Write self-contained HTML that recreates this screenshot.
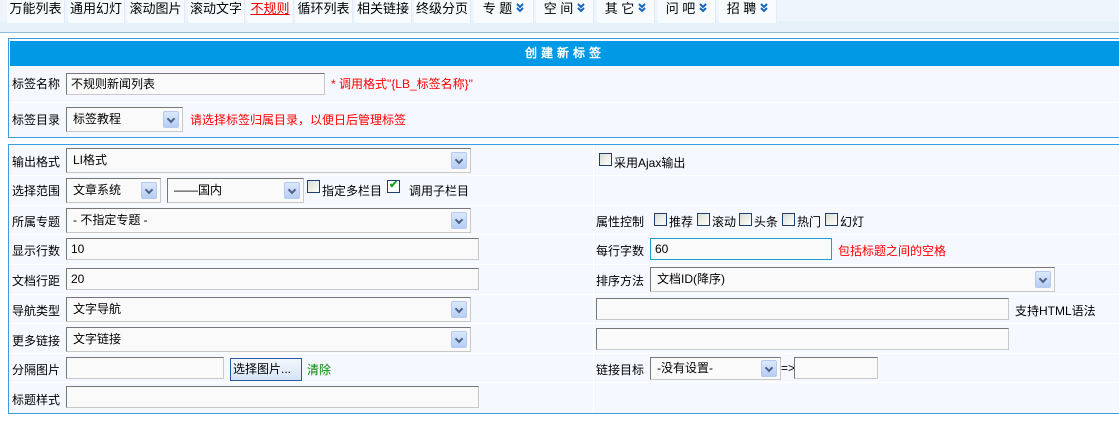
<!DOCTYPE html><html><head><meta charset="utf-8"><style>
*{margin:0;padding:0;box-sizing:border-box}
body{width:1119px;height:421px;overflow:hidden;background:#fff;font:12px "Liberation Sans","WenQuanYi Zen Hei",sans-serif;color:#000;position:relative}
.a{position:absolute;white-space:nowrap}
.nav{position:absolute;left:0;top:0;width:1119px;height:32px;background:#e6f1fa}
.nav .top{position:absolute;left:0;top:0;width:1119px;height:21px;background:#eef5fc}
.tab{position:absolute;top:0;height:23px;background:#f7fbfe;font-size:13px;line-height:18px;text-align:center;border-right:1px solid #e1ecf6}
.tab svg{vertical-align:-1px;margin-left:4px}
.line{position:absolute;left:0;top:32px;width:1119px;height:1px;background:#8fbedb}
.panel{position:absolute;left:8px;border:1px solid #3d9be0;background:#f5f8fe;right:-2px}
.hd{position:absolute;left:1px;right:0;top:2px;height:25px;background:#0099e6;color:#fff;font-weight:bold;text-align:center;line-height:25px;letter-spacing:4px}
.sep{position:absolute;left:0;right:0;height:1px;background:#fff}
.inp{position:absolute;height:22px;background:#fafafa;border:1px solid #c8c8c8;border-top-color:#777;border-left-color:#777;padding-left:4px;line-height:20px}
.sel{position:absolute;height:25px;background:#fafafa;border:1px solid #c8c8c8;border-top-color:#777;border-left-color:#777;padding-left:6px;line-height:22px}
.sel i{position:absolute;right:3px;top:3px;width:16px;height:17px;background:linear-gradient(#dbe8fb,#b5cdf4);border:1px solid #b6c9ee;border-radius:2px}
.sel i:after{content:"";position:absolute;left:4px;top:4px;width:4px;height:4px;border-right:2px solid #4d6185;border-bottom:2px solid #4d6185;transform:rotate(45deg)}
.cb{position:absolute;width:13px;height:13px;border:1px solid #1c3f6e;background:linear-gradient(135deg,#dcdcd4,#fff)}
.red{color:#f00}
</style></head><body>
<svg width="0" height="0" style="position:absolute"><defs><symbol id="dc" viewBox="0 0 8 11"><path d="M1 1l3 3 3-3M1 5l3 3 3-3" fill="none" stroke="#1565c0" stroke-width="2"/></symbol></defs></svg>
<div class="nav"><div class="top"></div>
<div class="tab" style="left:7px;width:58px">万能列表</div>
<div class="tab" style="left:68px;width:57px">通用幻灯</div>
<div class="tab" style="left:127px;width:58px">滚动图片</div>
<div class="tab" style="left:188px;width:57px">滚动文字</div>
<div class="tab" style="left:247px;width:47px;color:#e00;text-decoration:underline">不规则</div>
<div class="tab" style="left:295px;width:58px">循环列表</div>
<div class="tab" style="left:355px;width:57px">相关链接</div>
<div class="tab" style="left:414px;width:57px">终级分页</div>
<div class="tab" style="left:474px;width:60px">专 题<svg width="8" height="11"><use href="#dc"/></svg></div>
<div class="tab" style="left:536px;width:58px">空 间<svg width="8" height="11"><use href="#dc"/></svg></div>
<div class="tab" style="left:597px;width:58px">其 它<svg width="8" height="11"><use href="#dc"/></svg></div>
<div class="tab" style="left:658px;width:58px">问 吧<svg width="8" height="11"><use href="#dc"/></svg></div>
<div class="tab" style="left:719px;width:58px">招 聘<svg width="8" height="11"><use href="#dc"/></svg></div>
</div>
<div class="line"></div>

<div class="panel" style="top:38px;height:100px">
<div class="hd">创建新标签</div>
<div class="sep" style="top:63px"></div>
<div class="a" style="left:3px;top:36px">标签名称</div>
<div class="inp" style="left:57px;top:34px;width:259px">不规则新闻列表</div>
<div class="a red" style="left:322px;top:36px">* 调用格式"{LB_标签名称}"</div>
<div class="a" style="left:3px;top:72px">标签目录</div>
<div class="sel" style="left:57px;top:68px;width:117px">标签教程<i></i></div>
<div class="a red" style="left:181px;top:72px">请选择标签归属目录，以便日后管理标签</div>
</div>

<div class="panel" style="top:144px;height:270px">
<div class="sep" style="top:30px"></div><div class="sep" style="top:60px"></div><div class="sep" style="top:89px"></div><div class="sep" style="top:119px"></div><div class="sep" style="top:149px"></div><div class="sep" style="top:178px"></div><div class="sep" style="top:208px"></div><div class="sep" style="top:237px"></div>
<div class="a" style="left:584px;top:0;width:1px;height:268px;background:#fff"></div>
</div>

<div class="a" style="left:12px;top:153px">输出格式</div>
<div class="sel" style="left:66px;top:148px;width:405px">LI格式<i></i></div>
<div class="cb" style="left:599px;top:153px"></div><div class="a" style="left:614px;top:154px">采用Ajax输出</div>

<div class="a" style="left:12px;top:182px">选择范围</div>
<div class="sel" style="left:66px;top:178px;width:95px">文章系统<i></i></div>
<div class="sel" style="left:167px;top:178px;width:137px">——国内<i></i></div>
<div class="cb" style="left:307px;top:180px"></div><div class="a" style="left:322px;top:182px">指定多栏目</div>
<div class="cb" style="left:387px;top:180px;background:#fff"></div><div class="a" style="left:389px;top:178px;color:#1aa01a;font-size:11px;font-weight:bold">✔</div>
<div class="a" style="left:409px;top:182px">调用子栏目</div>

<div class="a" style="left:12px;top:213px">所属专题</div>
<div class="sel" style="left:66px;top:208px;width:405px">- 不指定专题 -<i></i></div>
<div class="a" style="left:596px;top:213px">属性控制</div>
<div class="cb" style="left:654px;top:213px"></div><div class="a" style="left:669px;top:213px">推荐</div>
<div class="cb" style="left:697px;top:213px"></div><div class="a" style="left:712px;top:213px">滚动</div>
<div class="cb" style="left:739px;top:213px"></div><div class="a" style="left:754px;top:213px">头条</div>
<div class="cb" style="left:782px;top:213px"></div><div class="a" style="left:797px;top:213px">热门</div>
<div class="cb" style="left:825px;top:213px"></div><div class="a" style="left:840px;top:213px">幻灯</div>

<div class="a" style="left:12px;top:242px">显示行数</div>
<div class="inp" style="left:66px;top:238px;width:413px">10</div>
<div class="a" style="left:596px;top:242px">每行字数</div>
<div class="inp" style="left:650px;top:238px;width:182px;border:1px solid #1a9fcf">60</div>
<div class="a red" style="left:838px;top:242px">包括标题之间的空格</div>

<div class="a" style="left:12px;top:272px">文档行距</div>
<div class="inp" style="left:66px;top:268px;width:413px">20</div>
<div class="a" style="left:596px;top:272px">排序方法</div>
<div class="sel" style="left:650px;top:267px;width:405px">文档ID(降序)<i></i></div>

<div class="a" style="left:12px;top:302px">导航类型</div>
<div class="sel" style="left:66px;top:297px;width:405px">文字导航<i></i></div>
<div class="inp" style="left:596px;top:298px;width:413px"></div>
<div class="a" style="left:1015px;top:302px">支持HTML语法</div>

<div class="a" style="left:12px;top:332px">更多链接</div>
<div class="sel" style="left:66px;top:327px;width:405px">文字链接<i></i></div>
<div class="inp" style="left:596px;top:328px;width:413px"></div>

<div class="a" style="left:12px;top:361px">分隔图片</div>
<div class="inp" style="left:66px;top:357px;width:158px"></div>
<div class="a" style="left:230px;top:358px;width:72px;height:23px;border:1px solid #2a5ba8;background:linear-gradient(#f4f8fd,#d5e3f6);line-height:20px;padding-left:2px">选择图片...</div>
<div class="a" style="left:307px;top:361px;color:#080">清除</div>
<div class="a" style="left:596px;top:361px">链接目标</div>
<div class="sel" style="left:650px;top:357px;width:131px;height:23px;line-height:20px">-没有设置-<i style="top:2px"></i></div>
<div class="a" style="left:781px;top:361px">=&gt;</div>
<div class="inp" style="left:794px;top:357px;width:84px"></div>

<div class="a" style="left:12px;top:391px">标题样式</div>
<div class="inp" style="left:66px;top:386px;width:413px"></div>
</body></html>
